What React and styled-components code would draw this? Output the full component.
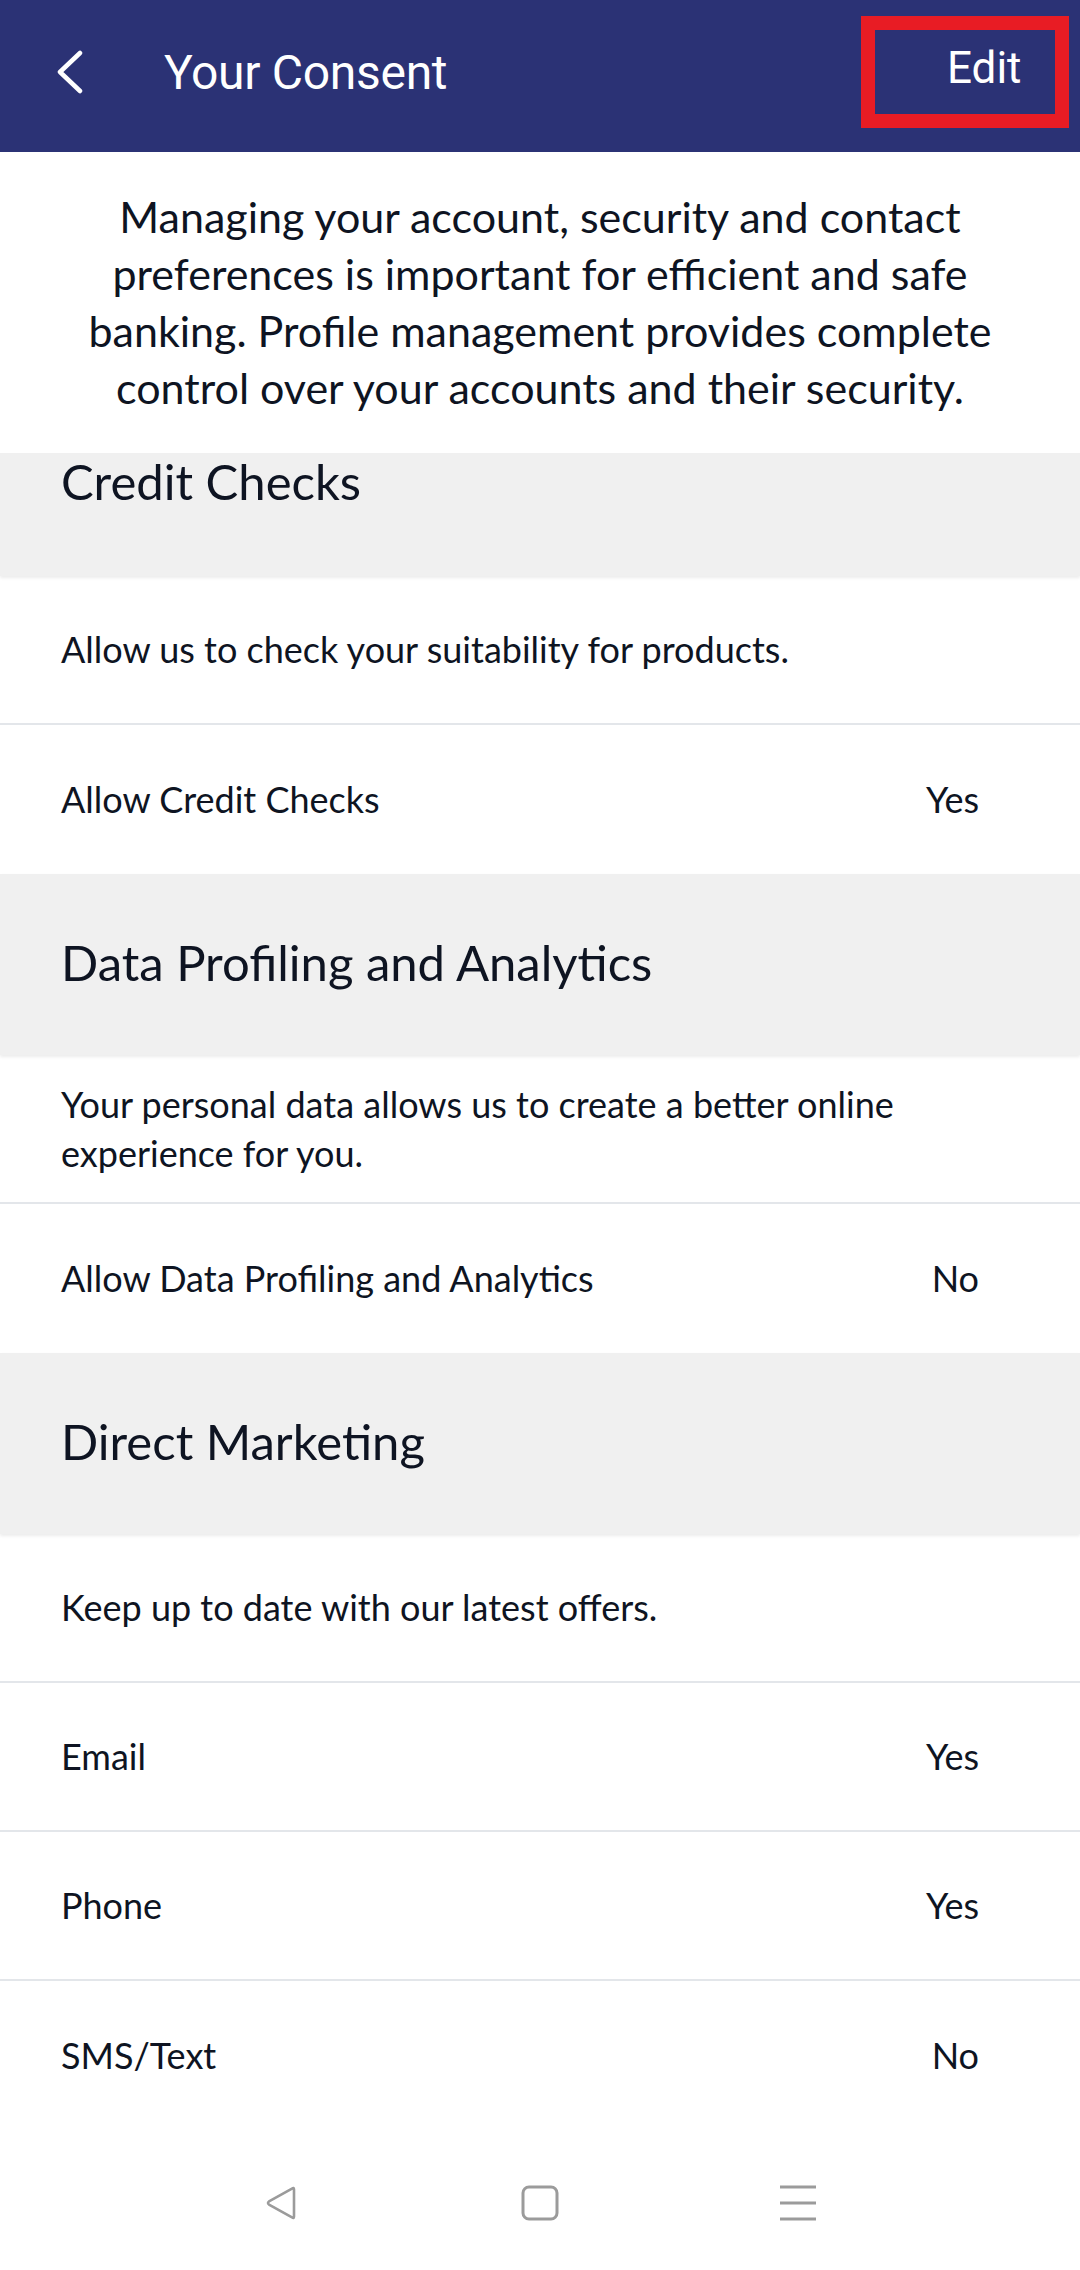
import React from "react";
import styled, { createGlobalStyle } from "styled-components";

const GlobalStyle = createGlobalStyle`
  html, body {
    margin: 0;
    padding: 0;
    background: #ffffff;
  }
  * {
    box-sizing: border-box;
  }
`;

const sections = [
  {
    title: "Credit Checks",
    clipped: true,
    description: "Allow us to check your suitability for products.",
    items: [{ label: "Allow Credit Checks", value: "Yes" }],
  },
  {
    title: "Data Profiling and Analytics",
    description:
      "Your personal data allows us to create a better online experience for you.",
    items: [{ label: "Allow Data Profiling and Analytics", value: "No" }],
  },
  {
    title: "Direct Marketing",
    description: "Keep up to date with our latest offers.",
    items: [
      { label: "Email", value: "Yes" },
      { label: "Phone", value: "Yes" },
      { label: "SMS/Text", value: "No" },
    ],
  },
];

const App = () => {
  return (
    <Page>
      <GlobalStyle />
      <TopBar>
        <BackButton aria-label="Back">
          <svg width="30" height="44" viewBox="0 0 30 44">
            <polyline
              points="25,3 5,22 25,41"
              fill="none"
              stroke="#ffffff"
              strokeWidth="4.5"
              strokeLinecap="round"
              strokeLinejoin="round"
            />
          </svg>
        </BackButton>
        <Title>Your Consent</Title>
        <EditButton>Edit</EditButton>
      </TopBar>

      <Intro>
        Managing your account, security and contact
        <br />
        preferences is important for efficient and safe
        <br />
        banking. Profile management provides complete
        <br />
        control over your accounts and their security.
      </Intro>

      <List>
        {sections.map(section => (
          <Section key={section.title}>
            <SectionHeader clipped={section.clipped}>
              <SectionTitle>{section.title}</SectionTitle>
            </SectionHeader>
            <Row bordered>
              <RowText>{section.description}</RowText>
            </Row>
            {section.items.map((item, i) => (
              <Row key={item.label} bordered={i < section.items.length - 1}>
                <RowText>{item.label}</RowText>
                <RowValue>{item.value}</RowValue>
              </Row>
            ))}
          </Section>
        ))}
      </List>

      <NavBar>
        <NavIcon aria-label="Back">
          <svg width="36" height="36" viewBox="0 0 36 36">
            <path
              d="M30 4.5 L30 31.5 Q30 34 28 32.3 L5 19.6 Q3 18 5 16.4 L28 3.7 Q30 2 30 4.5 Z"
              fill="none"
              stroke="#9b9b9b"
              strokeWidth="2.6"
              strokeLinejoin="round"
            />
          </svg>
        </NavIcon>
        <NavIcon aria-label="Home">
          <svg width="38" height="36" viewBox="0 0 38 36">
            <rect
              x="2"
              y="2"
              width="34"
              height="32"
              rx="6"
              fill="none"
              stroke="#9b9b9b"
              strokeWidth="3"
            />
          </svg>
        </NavIcon>
        <NavIcon aria-label="Menu">
          <svg width="38" height="36" viewBox="0 0 38 36">
            <g stroke="#9b9b9b" strokeWidth="3">
              <line x1="1" y1="2" x2="37" y2="2" />
              <line x1="1" y1="18" x2="37" y2="18" />
              <line x1="1" y1="34" x2="37" y2="34" />
            </g>
          </svg>
        </NavIcon>
      </NavBar>
    </Page>
  );
};

const Page = styled.div`
  width: 1080px;
  min-height: 2270px;
  display: flex;
  flex-direction: column;
  background: #ffffff;
  font-family: "Lato", "Open Sans", sans-serif;
  color: #0e1422;
`;

const TopBar = styled.header`
  height: 152px;
  display: flex;
  align-items: center;
  padding: 0 11px 8px 55px;
  background: #2b3275;
  color: #ffffff;
  font-family: "Roboto", "Liberation Sans", sans-serif;
`;

const BackButton = styled.button`
  background: none;
  border: none;
  padding: 0;
  width: 30px;
  height: 44px;
  display: flex;
  cursor: pointer;
`;

const Title = styled.h1`
  margin: 0 0 0 79px;
  flex: 1;
  font-size: 48px;
  font-weight: 400;
  letter-spacing: -0.3px;
`;

const EditButton = styled.button`
  width: 208px;
  height: 112px;
  padding: 0 0 8px 72px;
  text-align: left;
  background: none;
  border: 14px solid #e81c24;
  color: #ffffff;
  font-family: "Roboto", "Liberation Sans", sans-serif;
  font-size: 44px;
  cursor: pointer;
`;

const Intro = styled.p`
  margin: 0;
  padding: 36px 30px 37px;
  text-align: center;
  font-size: 43px;
  line-height: 57px;
  position: relative;
  z-index: 2;
  background: #ffffff;
`;

const List = styled.main`
  flex: 1;
  display: flex;
  flex-direction: column;
`;

const Section = styled.section`
  display: flex;
  flex-direction: column;
`;

const SectionHeader = styled.div`
  position: relative;
  z-index: 1;
  background: #f0f0f0;
  box-shadow: 0 2px 3px rgba(0, 0, 0, 0.08);
  padding: 0 61px ${props => (props.clipped ? "0" : "6px")};
  display: flex;
  align-items: ${props => (props.clipped ? "flex-start" : "center")};
  height: ${props => (props.clipped ? "123px" : "181px")};
`;

const SectionTitle = styled.h2`
  margin: ${props => (props.clipped ? "-3px" : "0")} 0 0;
  font-size: 49px;
  font-weight: 400;
  line-height: 56px;
`;

const Row = styled.div`
  min-height: 149px;
  padding: 24px 101px 24px 61px;
  display: flex;
  align-items: center;
  justify-content: space-between;
  gap: 40px;
  border-bottom: ${props => (props.bordered ? "2px solid #e3e6ea" : "none")};
`;

const RowText = styled.span`
  font-size: 36px;
  line-height: 49px;
`;

const RowValue = styled.span`
  font-size: 36px;
  line-height: 49px;
`;

const NavBar = styled.nav`
  height: 138px;
  display: flex;
  align-items: center;
  justify-content: center;
  padding-top: 4px;
`;

const NavIcon = styled.button`
  width: 258px;
  height: 60px;
  display: flex;
  align-items: center;
  justify-content: center;
  background: none;
  border: none;
  padding: 0;
`;

export default App;
